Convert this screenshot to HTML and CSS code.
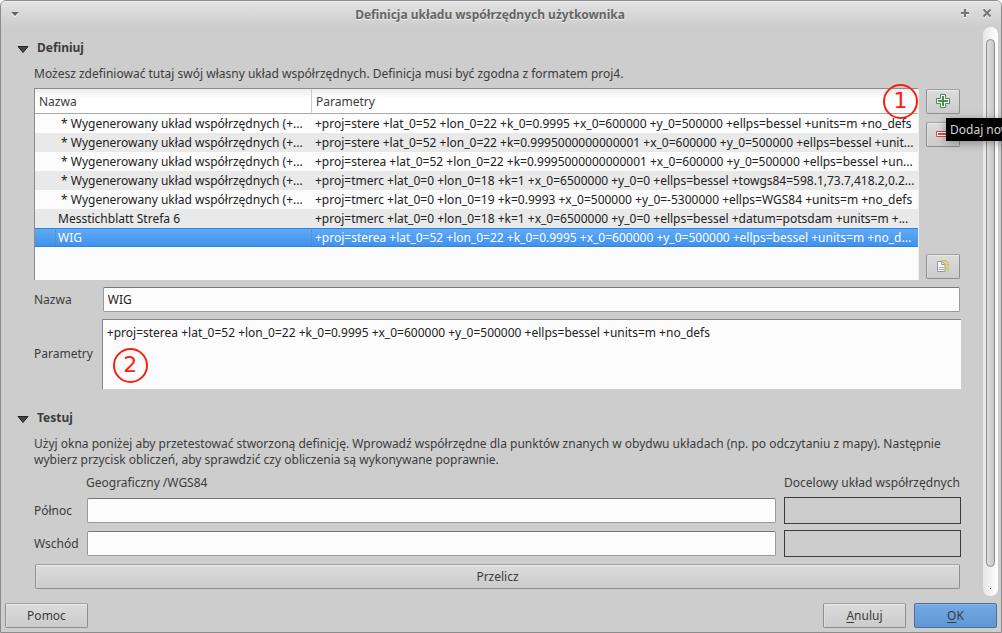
FILE: index.html
```html
<!DOCTYPE html>
<html lang="pl">
<head>
<meta charset="utf-8">
<title>Definicja układu współrzędnych użytkownika</title>
<link rel="stylesheet" href="styles.css">
</head>
<body>
<div class="window">
  <header class="titlebar">
    <button class="tb-btn" type="button" aria-label="Menu okna"><svg width="10" height="10" viewBox="0 0 10 10"><path d="M1 4h8L5 8z" fill="#fff"/><path d="M1 3h8L5 7z" fill="#666"/></svg></button>
    <h1 class="title">Definicja układu współrzędnych użytkownika</h1>
    <button class="tb-btn" type="button" aria-label="Maksymalizuj"><svg width="10" height="10" viewBox="0 0 10 10"><path d="M5 1v8M1 5h8" stroke="#f2f2f2" stroke-width="2"/><path d="M5 0v8M1 4h8" stroke="#757575" stroke-width="2"/></svg></button>
    <button class="tb-btn" type="button" aria-label="Zamknij"><svg width="10" height="10" viewBox="0 0 10 10"><path d="M1.500 1.500l7 7M8.500 1.500l-7 7" stroke="#f2f2f2" stroke-width="2"/><path d="M1.500 .5l7 7M8.500 .5l-7 7" stroke="#757575" stroke-width="2"/></svg></button>
  </header>

  <div class="body">
    <main class="content">
      <section class="section">
        <h2 class="heading"><svg width="12" height="9" viewBox="0 0 12 9"><path d="M1 1.500h10L6 7.500z" fill="#444" stroke="#222"/></svg>Definiuj</h2>
        <div class="group">
          <p class="intro">Możesz zdefiniować tutaj swój własny układ współrzędnych. Definicja musi być zgodna z formatem proj4.</p>
          <div class="list-row">
            <div class="list">
              <table class="crs">
                <colgroup><col class="col-name"><col></colgroup>
                <thead><tr><th>Nazwa</th><th>Parametry</th></tr></thead>
                <tbody>
                  <tr><td class="star">* Wygenerowany układ współrzędnych (+...</td><td>+proj=stere +lat_0=52 +lon_0=22 +k_0=0.9995 +x_0=600000 +y_0=500000 +ellps=bessel +units=m +no_defs</td></tr>
                  <tr><td class="star">* Wygenerowany układ współrzędnych (+...</td><td>+proj=stere +lat_0=52 +lon_0=22 +k=0.9995000000000001 +x_0=600000 +y_0=500000 +ellps=bessel +unit...</td></tr>
                  <tr><td class="star">* Wygenerowany układ współrzędnych (+...</td><td>+proj=sterea +lat_0=52 +lon_0=22 +k=0.9995000000000001 +x_0=600000 +y_0=500000 +ellps=bessel +un...</td></tr>
                  <tr><td class="star">* Wygenerowany układ współrzędnych (+...</td><td>+proj=tmerc +lat_0=0 +lon_0=18 +k=1 +x_0=6500000 +y_0=0 +ellps=bessel +towgs84=598.1,73.7,418.2,0.2...</td></tr>
                  <tr><td class="star">* Wygenerowany układ współrzędnych (+...</td><td>+proj=tmerc +lat_0=0 +lon_0=19 +k=0.9993 +x_0=500000 +y_0=-5300000 +ellps=WGS84 +units=m +no_defs</td></tr>
                  <tr><td>Messtichblatt Strefa 6</td><td>+proj=tmerc +lat_0=0 +lon_0=18 +k=1 +x_0=6500000 +y_0=0 +ellps=bessel +datum=potsdam +units=m +...</td></tr>
                  <tr class="selected"><td><span class="focus">WIG</span></td><td>+proj=sterea +lat_0=52 +lon_0=22 +k_0=0.9995 +x_0=600000 +y_0=500000 +ellps=bessel +units=m +no_d...</td></tr>
                </tbody>
              </table>
              <span class="marker marker-one">1</span>
            </div>
            <div class="tools">
              <button class="btn tool" type="button" aria-label="Dodaj"><svg width="14" height="14" viewBox="0 0 14 14"><path d="M4.500 .5h5v4h4v5h-4v4h-5v-4h-4v-5h4z" fill="#fff" stroke="#4a8a55"/><path d="M7 2v10M2 7h10" stroke="#4a8a55" stroke-width="2"/></svg></button>
              <button class="btn tool" type="button" aria-label="Usuń"><svg width="14" height="14" viewBox="0 0 14 14"><path d="M.5 4.500h13v5H.5z" fill="#fff" stroke="#d94848"/><path d="M2 7h10" stroke="#e04848" stroke-width="2"/></svg></button>
              <button class="btn tool tool-last" type="button" aria-label="Kopiuj"><svg width="14" height="14" viewBox="0 0 14 14"><path d="M5 1h5l3 3v8H5z" fill="#d8d18a"/><path d="M5.500 1.500H10l2.500 3V12" fill="none" stroke="#cabb45" stroke-dasharray="2 1"/><path d="M1.500 2.500H6l3 3v7H1.500z" fill="#f8f8f8" stroke="#999"/><path d="M5.500 2.500v3h3" fill="none" stroke="#999"/><path d="M3 8.500h5M3 10.500h5" stroke="#aaa"/></svg></button>
              <div class="tooltip" role="tooltip">Dodaj nowy</div>
            </div>
          </div>
          <div class="form">
            <label for="name">Nazwa</label>
            <div class="field-wrap"><input class="field" id="name" type="text" value="WIG"></div>
            <label for="params">Parametry</label>
            <div class="area-wrap">
              <textarea class="area" id="params">+proj=sterea +lat_0=52 +lon_0=22 +k_0=0.9995 +x_0=600000 +y_0=500000 +ellps=bessel +units=m +no_defs</textarea>
              <span class="marker marker-two">2</span>
            </div>
          </div>
        </div>
      </section>

      <section class="section">
        <h2 class="heading"><svg width="12" height="9" viewBox="0 0 12 9"><path d="M1 1.500h10L6 7.500z" fill="#444" stroke="#222"/></svg>Testuj</h2>
        <div class="group">
          <p class="help">Użyj okna poniżej aby przetestować stworzoną definicję. Wprowadź współrzędne dla punktów znanych w obydwu układach (np. po odczytaniu z mapy). Następnie wybierz przycisk obliczeń, aby sprawdzić czy obliczenia są wykonywane poprawnie.</p>
          <div class="test">
            <span class="geo">Geograficzny /WGS84</span>
            <span class="dest">Docelowy układ współrzędnych</span>
            <label for="north">Północ</label>
            <input class="field" id="north" type="text">
            <output class="result" for="north"></output>
            <label for="east">Wschód</label>
            <input class="field" id="east" type="text">
            <output class="result" for="east"></output>
          </div>
          <div class="calc-row"><button class="btn calc" type="button">Przelicz</button></div>
        </div>
      </section>
    </main>
    <div class="scrollbar"><div class="thumb"></div><span class="dot"></span></div>
  </div>

  <footer class="footer">
    <button class="btn dialog" type="button">Pomoc</button>
    <span class="spacer"></span>
    <button class="btn dialog" type="button"><u>A</u>nuluj</button>
    <button class="btn dialog primary" type="button"><u>O</u>K</button>
  </footer>
</div>
</body>
</html>
```
FILE: styles.css
```css
* { box-sizing: border-box; }
body {
  margin: 0;
  overflow-x: hidden;
  background: #fff;
  color: #3c3c3c;
  font: 12px/16px "Noto Sans", sans-serif;
}
button, input, textarea { font: inherit; color: inherit; }
h1, h2, p { margin: 0; font-size: 12px; }

.window {
  display: flex;
  flex-direction: column;
  min-height: 100vh;
  border: 1px solid #8c8c8c;
  border-radius: 6px 6px 0 0;
  background: #cdcdcd;
}
.titlebar {
  display: flex;
  align-items: center;
  gap: 12px;
  height: 26px;
  padding: 0 9px;
  border-top: 1px solid #eee;
  border-radius: 5px 5px 0 0;
  background: linear-gradient(#e2e2e2, #cdcdcd);
}
.title { flex: 1; text-align: center; color: #666; text-shadow: 0 1px #eee; }
.tb-btn { display: flex; padding: 0 0 2px; border: 0; background: none; }

.body { display: flex; flex: 1; gap: 22px; padding: 0 3px 0 16px; }
.content { flex: 1; min-width: 0; }
.section + .section { margin-top: 20px; }
.heading { display: flex; align-items: center; gap: 8px; height: 18px; }
.heading svg { margin-top: 2px; }
.section:first-child .heading { margin-top: 12px; }
.group { padding-left: 17px; }
.intro { margin: 9px 0 6px; }

.list-row { display: flex; gap: 7px; padding-right: 1px; }
.list {
  position: relative;
  flex: 1;
  min-width: 0;
  height: 192px;
  border: 1px solid #8c8c8c;
  border-right-color: #eee;
  border-bottom: 0;
  background: #fcfcfc;
}
.crs { width: 100%; table-layout: fixed; border-collapse: separate; border-spacing: 0; color: #222; }
.col-name { width: 277px; }
.crs th {
  height: 25px;
  padding: 1px 4px 0;
  border-bottom: 1px solid #aaa;
  background: linear-gradient(#ececec, #fff 40%);
  color: #3c3c3c;
  font-weight: 400;
  text-align: left;
}
.crs th:first-child { border-right: 1px solid #ccc; }
.crs td { height: 19px; padding: 0 0 0 3px; white-space: nowrap; overflow: hidden; }
.crs td:first-child { padding-left: 23px; }
.crs td.star { padding-left: 26px; }
.crs tr:nth-child(even) td { background: #e9e9e9; }
.crs .selected td {
  border: solid #2f83d8;
  border-width: 1px 0;
  background: linear-gradient(#5fa9f8, #3f92ec);
  color: #fff;
}
.crs .selected td:first-child { padding-left: 20px; }
.focus { display: block; padding-left: 2px; border: dotted #6d7f92; border-width: 0 1px; }

.marker {
  position: absolute;
  display: flex;
  align-items: center;
  justify-content: center;
  width: 35px;
  height: 35px;
  padding-bottom: 2px;
  border: 2px solid #f9200f;
  border-radius: 50%;
  color: #f9200f;
  font: 22px/22px "DejaVu Sans", sans-serif;
}
.marker-one { top: -5px; right: 0; }
.marker-two { top: 29px; left: 11px; }

.btn {
  border: 1px solid #8e8e8e;
  border-top-color: #a0a0a0;
  border-radius: 2px;
  background: linear-gradient(#dcdcdc, #cbcbcb);
  box-shadow: inset 0 1px #ececec, inset 1px 0 #dedede;
  padding: 0;
  height: 25px;
}
.tools { position: relative; display: flex; flex-direction: column; gap: 8px; padding: 1px 0; }
.tool { display: flex; align-items: center; justify-content: center; width: 34px; padding-bottom: 1px; }
.tool-last { margin-top: auto; }
.tooltip {
  position: absolute;
  top: 30px;
  left: 20px;
  padding: 4px 4px 3px;
  background: #000;
  box-shadow: 0 2px 10px #00000055;
  color: #d5d5d5;
  white-space: nowrap;
}

.form {
  display: grid;
  grid-template-columns: auto 1fr;
  align-items: center;
  gap: 7px 9px;
  margin-top: 7px;
}
.field-wrap { display: flex; padding: 0 1px; }
.field {
  width: 100%;
  height: 25px;
  padding: 0 4px;
  border: 1px solid #999;
  border-top-color: #777;
  border-radius: 2px;
  background: #fcfcfc;
  color: #222;
}
.area-wrap { position: relative; }
.area {
  display: block;
  width: 100%;
  height: 70px;
  padding: 5px 4px;
  border: solid #858585;
  border-width: 1px 0 0 1px;
  background: #fcfcfc;
  color: #222;
  resize: none;
}

.help { margin: 9px 0 7px; }
.test {
  display: grid;
  grid-template-columns: auto 1fr 177px;
  align-items: center;
  gap: 6px 8px;
}
.geo { grid-column: 1 / 3; padding-left: 52px; }
.test .field { min-width: 0; }
.result { height: 27px; border: 1px solid #3c3c3c; }
.calc-row { display: flex; padding: 7px 1px; }
.calc { flex: 1; }

.scrollbar {
  display: flex;
  flex-direction: column;
  align-items: center;
  width: 15px;
  padding: 12px 0 7px;
  border-radius: 7px;
  background: linear-gradient(90deg, #e6e6e6, #fff);
}
.thumb { flex: 1; width: 9px; border: 1px solid #8c8c8c; border-radius: 5px; background: linear-gradient(90deg, #ddd, #c8c8c8); }
.dot { width: 1px; height: 1px; margin-top: 21px; background: #444; }

.footer { display: flex; gap: 8px; padding: 7px 4px 4px; }
.spacer { flex: 1; }
.dialog { width: 83px; }
.dialog u { text-underline-offset: 2px; }
.primary { border-color: #4a6f9c; background: linear-gradient(#74a8e2, #5f98d5); box-shadow: inset 0 1px #8ab8ea; }
```
